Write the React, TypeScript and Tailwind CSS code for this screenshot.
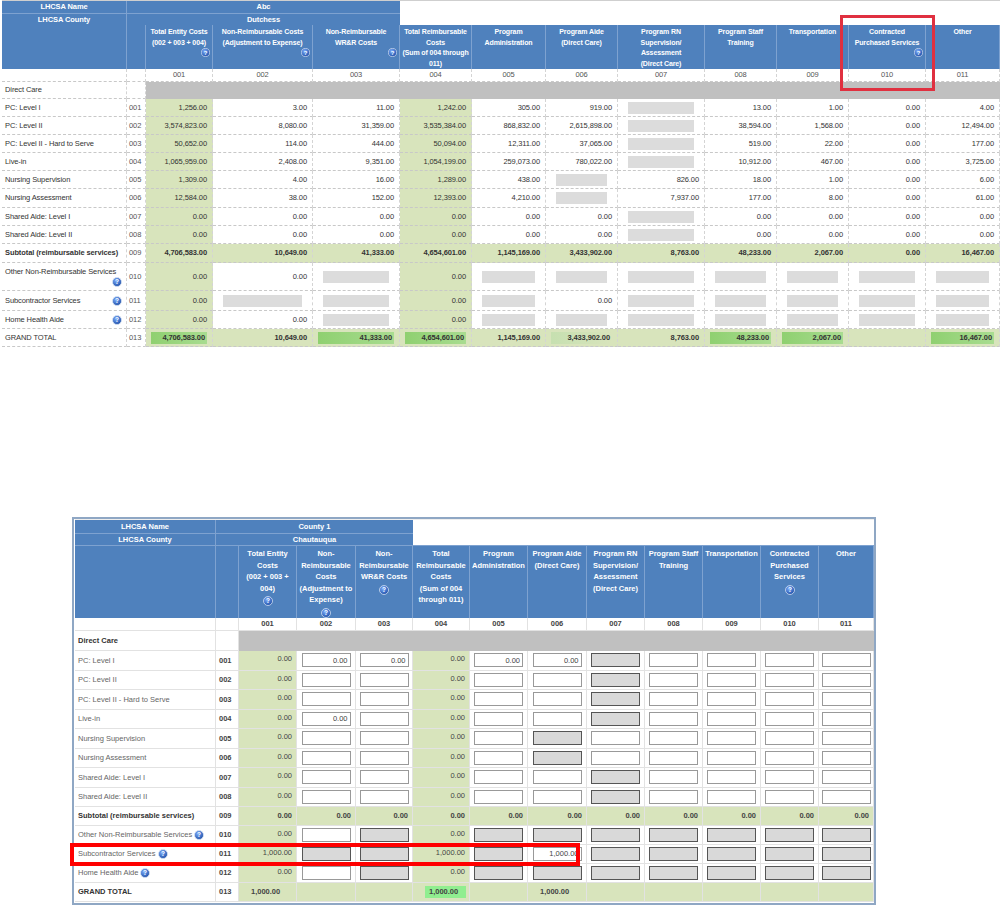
import React from "react";

const Help = ({ size = 9 }: { size?: number }) => (
  <svg width={size} height={size} viewBox="0 0 20 20" className="inline-block shrink-0">
    <defs>
      <radialGradient id="hg" cx="40%" cy="35%" r="65%">
        <stop offset="0%" stopColor="#7fb0ff" />
        <stop offset="100%" stopColor="#1f4fa8" />
      </radialGradient>
    </defs>
    <circle cx="10" cy="10" r="9" fill="url(#hg)" stroke="#dfe9f7" strokeWidth="1.5" />
    <text x="10" y="14.5" textAnchor="middle" fontSize="13" fontWeight="bold" fill="#fff" fontFamily="Liberation Sans, sans-serif">?</text>
  </svg>
);

const T1COLS = "grid-cols-[125px_19px_67px_100px_87px_72px_74px_72px_87px_72px_72px_77px_74px]";
const T2COLS = "grid-cols-[141px_23px_58px_59px_57px_57px_58px_59px_58px_58px_58px_58px_55px]";

const heads1 = [
  ["Total Entity Costs", "(002 + 003 + 004)", "?"],
  ["Non-Reimbursable Costs", "(Adjustment to Expense)", "?"],
  ["Non-Reimbursable", "WR&R Costs", "?"],
  ["Total Reimbursable", "Costs", "(Sum of 004 through", "011)"],
  ["Program", "Administration"],
  ["Program Aide", "(Direct Care)"],
  ["Program RN", "Supervision/", "Assessment", "(Direct Care)"],
  ["Program Staff", "Training"],
  ["Transportation"],
  ["Contracted", "Purchased Services", "?"],
  ["Other"],
];
const heads2 = [
  ["Total Entity", "Costs", "(002 + 003 +", "004)", "?"],
  ["Non-", "Reimbursable", "Costs", "(Adjustment to", "Expense)", "?"],
  ["Non-", "Reimbursable", "WR&R Costs", "?"],
  ["Total", "Reimbursable", "Costs", "(Sum of 004", "through 011)"],
  ["Program", "Administration"],
  ["Program Aide", "(Direct Care)"],
  ["Program RN", "Supervision/", "Assessment", "(Direct Care)"],
  ["Program Staff", "Training"],
  ["Transportation"],
  ["Contracted", "Purchased", "Services", "?"],
  ["Other"],
];
const codes = ["001", "002", "003", "004", "005", "006", "007", "008", "009", "010", "011"];

type R1 = { label: string; code: string; h: string; cells: string[]; help?: boolean; bold?: boolean; sub?: boolean; grand?: boolean; hl?: number[] };
const X = "X";
const z = ["0.00", "0.00", "0.00", "0.00", "0.00", "0.00", X, "0.00", "0.00", "0.00", "0.00"];
const rows1: R1[] = [
  { label: "PC: Level I", code: "001", h: "h-[18px]", cells: ["1,256.00", "3.00", "11.00", "1,242.00", "305.00", "919.00", X, "13.00", "1.00", "0.00", "4.00"] },
  { label: "PC: Level II", code: "002", h: "h-[18px]", cells: ["3,574,823.00", "8,080.00", "31,359.00", "3,535,384.00", "868,832.00", "2,615,898.00", X, "38,594.00", "1,568.00", "0.00", "12,494.00"] },
  { label: "PC: Level II - Hard to Serve", code: "003", h: "h-[18px]", cells: ["50,652.00", "114.00", "444.00", "50,094.00", "12,311.00", "37,065.00", X, "519.00", "22.00", "0.00", "177.00"] },
  { label: "Live-in", code: "004", h: "h-[18px]", cells: ["1,065,959.00", "2,408.00", "9,351.00", "1,054,199.00", "259,073.00", "780,022.00", X, "10,912.00", "467.00", "0.00", "3,725.00"] },
  { label: "Nursing Supervision", code: "005", h: "h-[18px]", cells: ["1,309.00", "4.00", "16.00", "1,289.00", "438.00", X, "826.00", "18.00", "1.00", "0.00", "6.00"] },
  { label: "Nursing Assessment", code: "006", h: "h-[19px]", cells: ["12,584.00", "38.00", "152.00", "12,393.00", "4,210.00", X, "7,937.00", "177.00", "8.00", "0.00", "61.00"] },
  { label: "Shared Aide: Level I", code: "007", h: "h-[18px]", cells: z },
  { label: "Shared Aide: Level II", code: "008", h: "h-[18px]", cells: z },
  { label: "Subtotal (reimbursable services)", code: "009", h: "h-[19px]", bold: true, sub: true, cells: ["4,706,583.00", "10,649.00", "41,333.00", "4,654,601.00", "1,145,169.00", "3,433,902.00", "8,763.00", "48,233.00", "2,067.00", "0.00", "16,467.00"] },
  { label: "Other Non-Reimbursable Services", code: "010", h: "h-[28px]", help: true, cells: ["0.00", "0.00", X, "0.00", X, X, X, X, X, X, X] },
  { label: "Subcontractor Services", code: "011", h: "h-[20px]", help: true, cells: ["0.00", X, X, "0.00", X, "0.00", X, X, X, X, X] },
  { label: "Home Health Aide", code: "012", h: "h-[18px]", help: true, cells: ["0.00", "0.00", X, "0.00", X, X, X, X, X, X, X] },
  { label: "GRAND TOTAL", code: "013", h: "h-[18px]", grand: true, sub: true, cells: ["4,706,583.00", "10,649.00", "41,333.00", "4,654,601.00", "1,145,169.00", "3,433,902.00", "8,763.00", "48,233.00", "2,067.00", "", "16,467.00"], hl: [0, 2, 3, 5, 7, 8, 10] },
];

function Table1() {
  const cellB = "border-r border-[#d4d4d4] border-b border-dashed border-b-[#c8c8c8]";
  return (
    <div className="ml-[2px] w-[998px] border-t border-[#cfcfcf] text-[7.5px] text-[#333] tracking-[-0.1px]" style={{ fontFamily: "'Liberation Sans', Arial, sans-serif" }}>
      <div className={`grid ${T1COLS} h-[12px]`}>
        <div className="bg-[#4f81bd] text-white font-bold flex items-center justify-center border-r border-[#7ea2d0]">LHCSA Name</div>
        <div className="col-span-4 bg-[#4f81bd] text-white font-bold flex items-center justify-center">Abc</div>
      </div>
      <div className={`grid ${T1COLS} h-[12px]`}>
        <div className="bg-[#4f81bd] text-white font-bold flex items-center justify-center border-r border-t border-[#7ea2d0]">LHCSA County</div>
        <div className="col-span-4 bg-[#4f81bd] text-white font-bold flex items-center justify-center border-t border-[#7ea2d0]">Dutchess</div>
      </div>
      <div className={`grid ${T1COLS} h-[44px] bg-[#4f81bd] text-white font-bold text-[7px]`}>
        <div className="border-r border-[#7ea2d0]" />
        <div className="border-r border-[#7ea2d0]" />
        {heads1.map((h, i) => (
          <div key={i} className="border-r border-[#7ea2d0] flex flex-col items-center pt-[2px] leading-[10.5px] relative overflow-hidden">
            {h.filter((t) => t !== "?").map((t, j) => <div key={j} className="whitespace-nowrap">{t}</div>)}
            {h.includes("?") && <div className="self-end pr-[2px] -mt-[1px]"><Help size={9} /></div>}
          </div>
        ))}
      </div>
      <div className={`grid ${T1COLS} h-[13px]`}>
        <div className={cellB} />
        <div className={cellB} />
        {codes.map((c) => <div key={c} className={`${cellB} flex items-center justify-center text-[#555]`}>{c}</div>)}
      </div>
      <div className={`grid ${T1COLS} h-[17px]`}>
        <div className={`${cellB} flex items-center pl-[3px]`}>Direct Care</div>
        <div className={cellB} />
        <div className="col-span-11 bg-[#c0c0c0]" />
      </div>
      {rows1.map((r) => (
        <div key={r.code} className={`grid ${T1COLS} ${r.h}`}>
          <div className={`${cellB} flex ${r.code === "010" ? "flex-col justify-center" : "items-center justify-between"} pl-[3px] pr-[4px] whitespace-nowrap overflow-hidden ${r.bold ? "font-bold" : ""}`}>
            <span>{r.label}</span>
            {r.help && <span className={r.code === "010" ? "self-end leading-none" : "leading-none"}><Help size={10} /></span>}
          </div>
          <div className={`${cellB} flex items-center pl-[2px] text-[#555]`}>{r.code}</div>
          {r.cells.map((v, i) => {
            const green = r.sub || i === 0 || i === 3;
            const bg = green ? "bg-[#d8e4bc]" : "bg-white";
            const hl = r.hl?.includes(i);
            return (
              <div key={i} className={`${cellB} ${bg} flex items-center justify-end px-[5px] ${r.sub ? "font-bold" : ""}`}>
                {v === X ? (
                  <div className="w-full h-[12px] bg-[#dcdcdc] mx-[5px]" />
                ) : hl ? (
                  <div className={`w-full h-[12px] flex items-center justify-end pr-[2px] ${i === 5 ? "bg-gradient-to-r from-[#c6e0b0] to-[#d8e4bc]" : "bg-gradient-to-r from-[#8fd070] to-[#a8dc90]"}`}>{v}</div>
                ) : (
                  <span>{v}</span>
                )}
              </div>
            );
          })}
        </div>
      ))}
    </div>
  );
}

type C2 = string;
type R2 = { label: string; code: string; cells: C2[]; help?: boolean; sub?: boolean; grand?: boolean };
const I = "in", D = "dis";
const base = ["g:0.00", I, I, "g:0.00", I, I, D, I, I, I, I];
const base5 = ["g:0.00", I, I, "g:0.00", I, D, I, I, I, I, I];
const rows2: R2[] = [
  { label: "PC: Level I", code: "001", cells: ["g:0.00", "in:0.00", "in:0.00", "g:0.00", "in:0.00", "in:0.00", D, I, I, I, I] },
  { label: "PC: Level II", code: "002", cells: base },
  { label: "PC: Level II - Hard to Serve", code: "003", cells: base },
  { label: "Live-in", code: "004", cells: ["g:0.00", "in:0.00", I, "g:0.00", I, I, D, I, I, I, I] },
  { label: "Nursing Supervision", code: "005", cells: base5 },
  { label: "Nursing Assessment", code: "006", cells: base5 },
  { label: "Shared Aide: Level I", code: "007", cells: base },
  { label: "Shared Aide: Level II", code: "008", cells: base },
  { label: "Subtotal (reimbursable services)", code: "009", sub: true, cells: Array(11).fill("s:0.00") },
  { label: "Other Non-Reimbursable Services", code: "010", help: true, cells: ["g:0.00", I, D, "g:0.00", D, D, D, D, D, D, D] },
  { label: "Subcontractor Services", code: "011", help: true, cells: ["g:1,000.00", D, D, "g:1,000.00", D, "in:1,000.00", D, D, D, D, D] },
  { label: "Home Health Aide", code: "012", help: true, cells: ["g:0.00", I, D, "g:0.00", D, D, D, D, D, D, D] },
  { label: "GRAND TOTAL", code: "013", grand: true, cells: ["t:1,000.00", "t:", "t:", "h:1,000.00", "t:", "t:1,000.00", "t:", "t:", "t:", "t:", "t:"] },
];

function Table2() {
  const cb = "border-r border-b border-[#e2e2e2]";
  return (
    <div className="relative ml-[72px] w-[804px] border-2 border-[#8fa7c4] pl-[1px] pb-[1px] text-[7.5px] text-[#444]" style={{ fontFamily: "'Liberation Sans', Arial, sans-serif" }}>
      <div className="border-t border-[#eee]">
        <div className={`grid ${T2COLS} h-[13px]`}>
          <div className="bg-[#4f81bd] text-white font-bold flex items-center justify-center border-r border-[#7ea2d0]">LHCSA Name</div>
          <div className="col-span-4 bg-[#4f81bd] text-white font-bold flex items-center justify-center">County 1</div>
        </div>
        <div className={`grid ${T2COLS} h-[12px]`}>
          <div className="bg-[#4f81bd] text-white font-bold flex items-center justify-center border-r border-t border-[#7ea2d0]">LHCSA County</div>
          <div className="col-span-4 bg-[#4f81bd] text-white font-bold flex items-center justify-center border-t border-[#7ea2d0]">Chautauqua</div>
        </div>
        <div className={`grid ${T2COLS} h-[73px] bg-[#4f81bd] text-white font-bold border-t border-[#7ea2d0]`}>
          <div className="border-r border-[#7ea2d0]" />
          <div className="border-r border-[#7ea2d0]" />
          {heads2.map((h, i) => (
            <div key={i} className="border-r border-[#7ea2d0] flex flex-col items-center pt-[2px] leading-[11.5px] text-center">
              {h.filter((t) => t !== "?").map((t, j) => <div key={j} className="whitespace-nowrap">{t}</div>)}
              {h.includes("?") && <div className="mt-[1px]"><Help size={10} /></div>}
            </div>
          ))}
        </div>
        <div className={`grid ${T2COLS} h-[13px] font-bold`}>
          <div className={cb} />
          <div className={cb} />
          {codes.map((c) => <div key={c} className={`${cb} flex items-center justify-center`}>{c}</div>)}
        </div>
        <div className={`grid ${T2COLS} h-[20px]`}>
          <div className={`${cb} flex items-center pl-[3px] font-bold text-[#333]`}>Direct Care</div>
          <div className={cb} />
          <div className="col-span-11 bg-[#c0c0c0]" />
        </div>
        {rows2.map((r) => (
          <div key={r.code} className={`grid ${T2COLS} ${Number(r.code) <= 8 ? "h-[19.5px]" : "h-[19px]"}`}>
            <div className={`${cb} flex items-center gap-[2px] pl-[3px] ${r.sub || r.grand ? "font-bold text-[#333]" : "text-[#666]"}`}>
              <span className="whitespace-nowrap">{r.label}</span>
              {r.help && <Help size={10} />}
            </div>
            <div className={`${cb} flex items-center pl-[3px] font-bold`}>{r.code}</div>
            {r.cells.map((c, i) => {
              const [k, v = ""] = c.split(":");
              if (k === "g" || k === "s" || k === "t" || k === "h") {
                return (
                  <div key={i} className={`${cb} bg-[#d8e4bc] flex ${k === "s" ? "items-center font-bold" : k === "g" ? "items-start pt-[2px]" : "items-center font-bold"} ${k === "t" || k === "h" ? "justify-start pl-[12px]" : "justify-end pr-[4px]"}`}>
                    {k === "h" ? <span className="bg-[#90ee90] pl-[4px] pr-[8px]">{v}</span> : <span>{v}</span>}
                  </div>
                );
              }
              return (
                <div key={i} className={`${cb} flex items-center justify-center bg-white`}>
                  <div className={`w-[49px] h-[14px] border ${k === "dis" ? "bg-[#d9d9d9] border-[#555]" : "bg-white border-[#999]"} flex items-center justify-end pr-[2px] text-[#444]`}>{v}</div>
                </div>
              );
            })}
          </div>
        ))}
      </div>
    </div>
  );
}

export default function App() {
  return (
    <div className="w-[1002px] h-[908px] bg-white relative overflow-hidden">
      <Table1 />
      <div className="mt-[170px]">
        <Table2 />
      </div>
      <div className="absolute left-[840px] top-[15px] w-[95px] h-[76px] border-[3px] border-[#e03040]" />
      <div className="absolute left-[70px] top-[843px] w-[510px] h-[23px] border-[4px] border-[#ff0000]" />
    </div>
  );
}
